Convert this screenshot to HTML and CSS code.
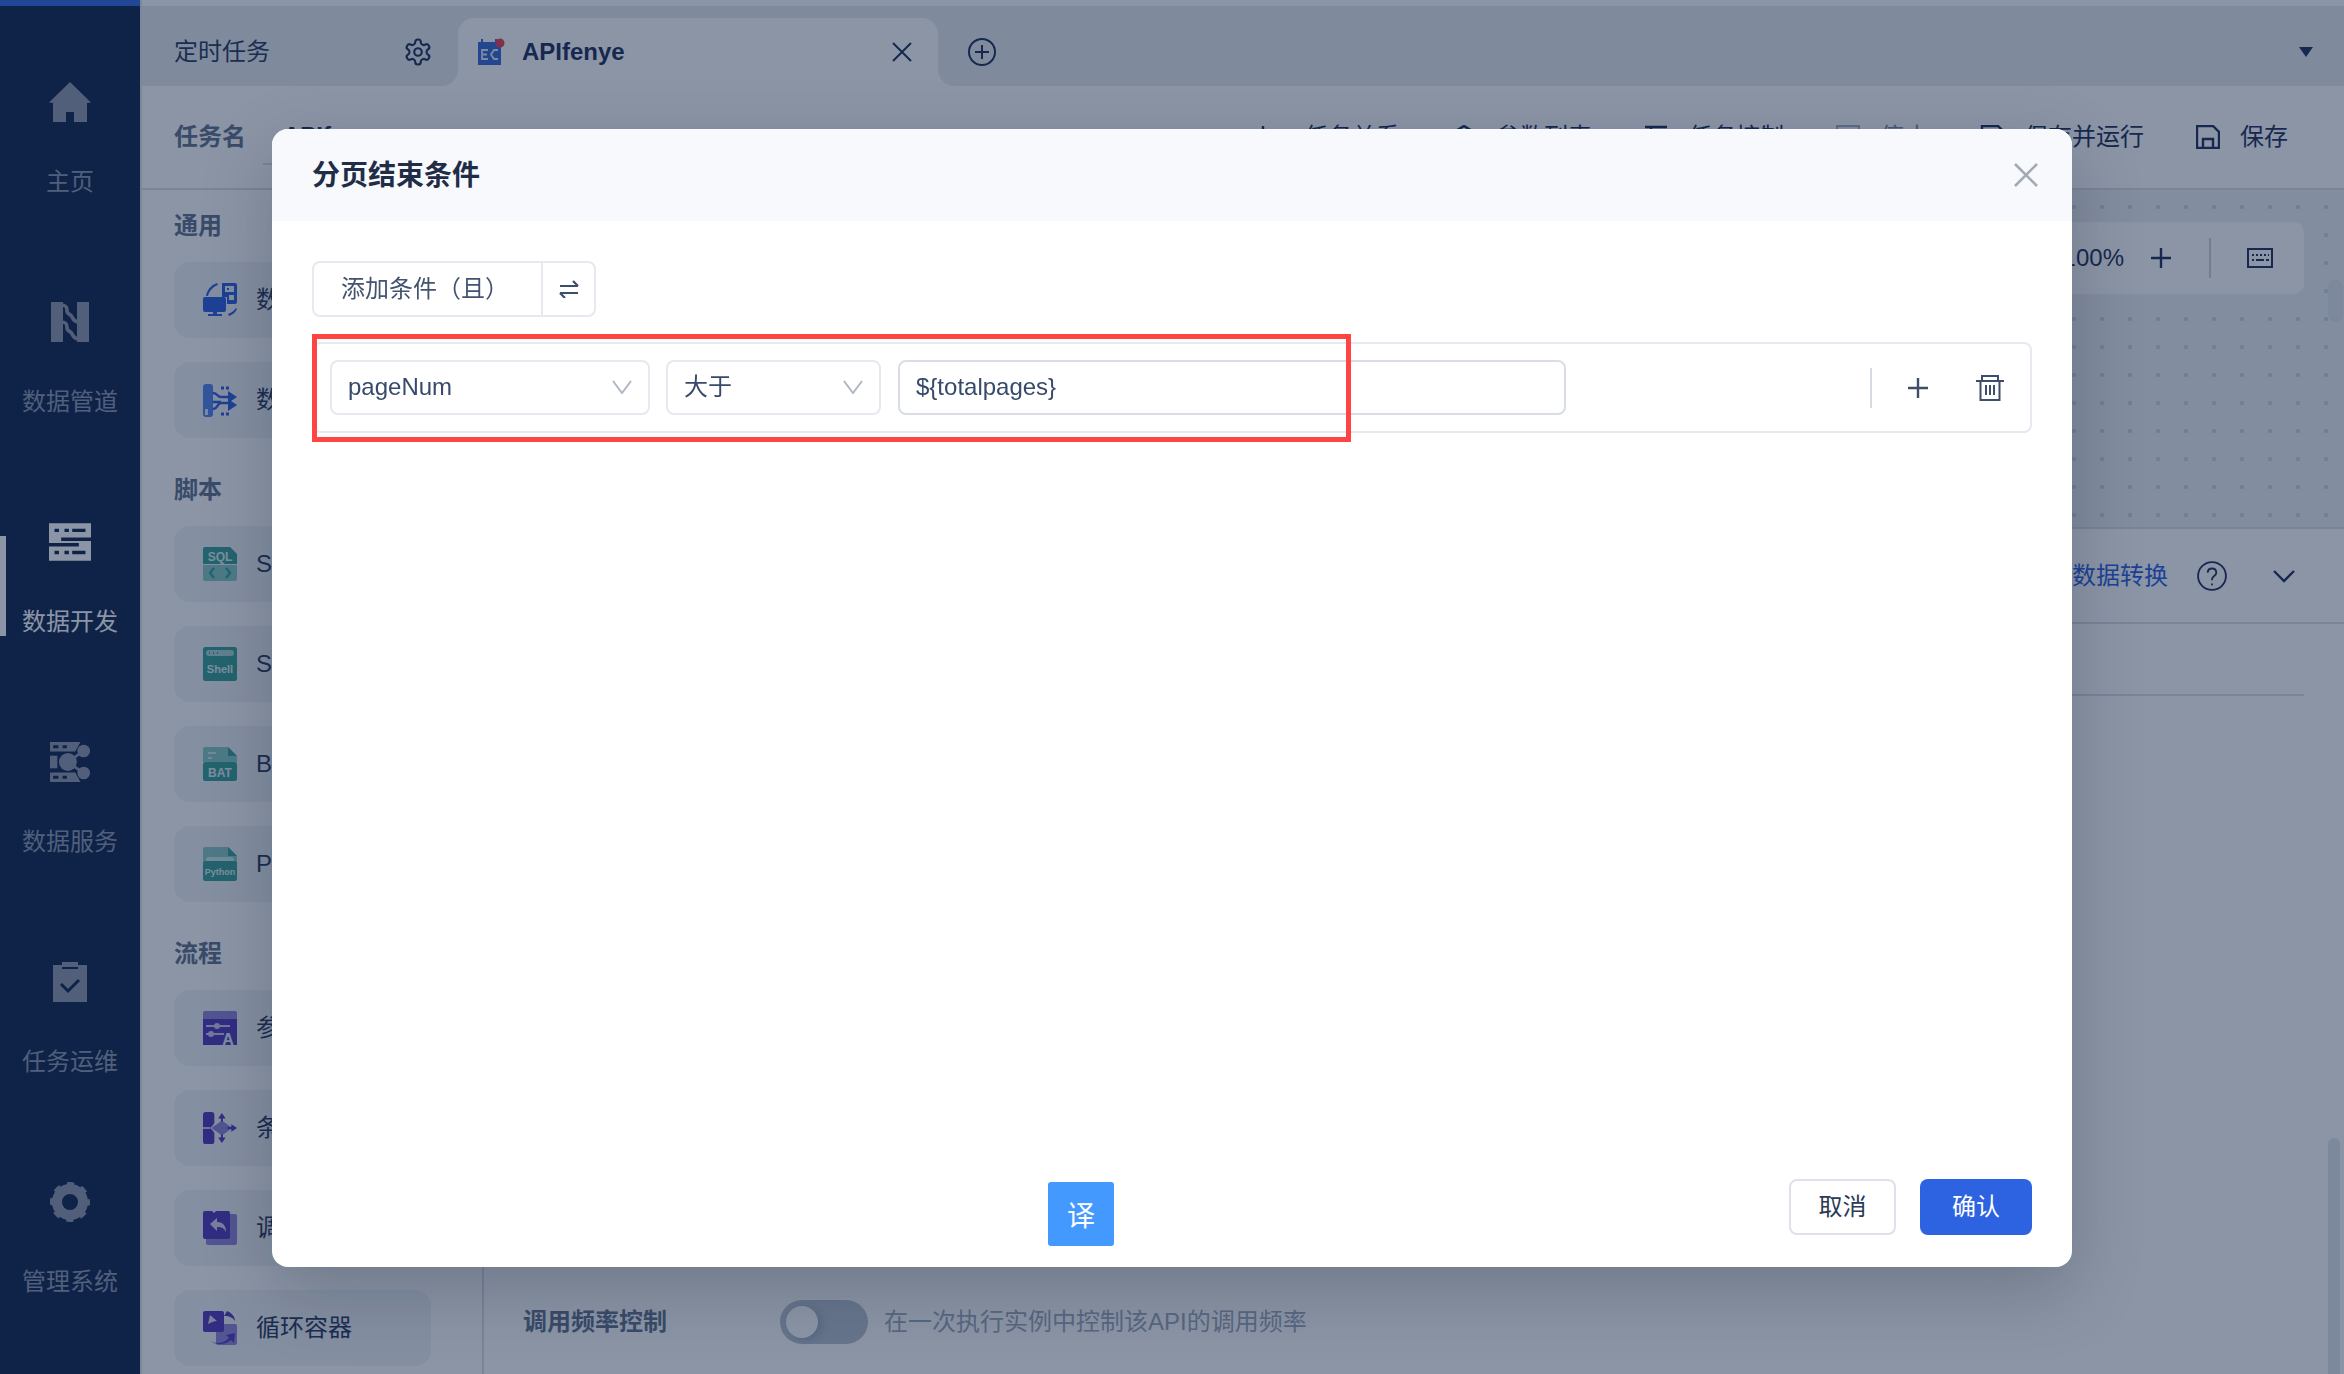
FILE: index.html
```html
<!DOCTYPE html>
<html lang="zh-CN">
<head>
<meta charset="utf-8">
<title>分页结束条件</title>
<link rel="stylesheet" href="styles.css">
</head>
<body>
<div class="app">
  <nav class="sidebar">
    <div class="strip"></div>
    <a class="nav-item">
      <svg class="nav-icon" viewBox="0 0 42 40"><path d="M21 0 42 20.5 38 21V40H25V30H17V40H4V21L0 20.5Z"/></svg>
      <span>主页</span>
    </a>
    <a class="nav-item">
      <svg class="nav-icon" viewBox="0 0 38 40"><path d="M0 0h12v40H0zM26 0h12v40H26z"/><path class="wave" d="M10 3c10 0 3 7 8 9s2 7 9 8M10 20c10 0 3 7 8 9s2 7 9 8" fill="none" stroke-width="3.6"/></svg>
      <span>数据管道</span>
    </a>
    <a class="nav-item is-active">
      <svg class="nav-icon" viewBox="0 0 38 34"><path fill-rule="evenodd" d="M0 0h38v13H11v3h27v18H0V21h27v-3H0zM5 5v3h4V5zm9 0v3h4V5zm7 0v3h12V5zM5 25v3h4v-3zm9 0v3h4v-3zm7 0v3h12v-3z"/></svg>
      <span>数据开发</span>
    </a>
    <a class="nav-item">
      <svg class="nav-icon" viewBox="0 0 38 38"><path fill-rule="evenodd" d="M0 0h29l-5 9H0zM3 3v3h5V3zm9 0v3h4V3zM0 29h24l5 9H0zM3 32v3h5v-3zm9 0v3h4v-3z"/><path d="M0 13h7v12H0z"/><circle cx="32" cy="8.500" r="6"/><circle cx="32" cy="29.500" r="6"/><circle cx="17" cy="19" r="8.500"/><path class="link-line" d="M17 19 32 8.500M17 19l15 10.500" stroke-width="2.600"/></svg>
      <span>数据服务</span>
    </a>
    <a class="nav-item">
      <svg class="nav-icon" viewBox="0 0 34 40"><path d="M0 3h9V0h16v3h9v37H0z"/><path class="cut" d="M9 6h16" fill="none" stroke-width="2"/><path class="cut" d="m8 22 7 7 11-11" fill="none" stroke-width="3"/></svg>
      <span>任务运维</span>
    </a>
    <a class="nav-item">
      <svg class="nav-icon" viewBox="0 0 40 40"><circle class="ring" cx="20" cy="20" r="13" fill="none" stroke-width="10"/><circle class="ring" cx="20" cy="20" r="18" fill="none" stroke-width="4" stroke-dasharray="7 7.14" stroke-dashoffset="3.5"/></svg>
      <span>管理系统</span>
    </a>
  </nav>

  <main class="main">
    <div class="strip strip-main"></div>
    <div class="tabbar">
      <div class="tab">
        <span class="tab-title">定时任务</span>
        <svg class="gear" viewBox="0 0 24 24"><path d="M12.22 2h-.44a2 2 0 0 0-2 2v.18a2 2 0 0 1-1 1.73l-.43.25a2 2 0 0 1-2 0l-.15-.08a2 2 0 0 0-2.73.73l-.22.38a2 2 0 0 0 .73 2.73l.15.1a2 2 0 0 1 1 1.72v.51a2 2 0 0 1-1 1.74l-.15.09a2 2 0 0 0-.73 2.73l.22.38a2 2 0 0 0 2.73.73l.15-.08a2 2 0 0 1 2 0l.43.25a2 2 0 0 1 1 1.73V20a2 2 0 0 0 2 2h.44a2 2 0 0 0 2-2v-.18a2 2 0 0 1 1-1.73l.43-.25a2 2 0 0 1 2 0l.15.08a2 2 0 0 0 2.73-.73l.22-.39a2 2 0 0 0-.73-2.73l-.15-.08a2 2 0 0 1-1-1.74v-.5a2 2 0 0 1 1-1.74l.15-.09a2 2 0 0 0 .73-2.73l-.22-.38a2 2 0 0 0-2.73-.73l-.15.08a2 2 0 0 1-2 0l-.43-.25a2 2 0 0 1-1-1.73V4a2 2 0 0 0-2-2z"/><circle cx="12" cy="12" r="3"/></svg>
      </div>
      <div class="tab-wrap">
        <div class="tab-active">
          <svg class="tab-icon" viewBox="0 0 28 28"><path class="cal" d="M1 5h3V2h2v3h12V2h2v3h4v23H1z"/><path d="M11 13H5v9h6M5 17.500h5M21 13h-4l-3 4.500 3 4.500h4" fill="none" stroke="#dfe6f5" stroke-width="1.8"/><circle class="dot" cx="23" cy="6" r="4.500"/></svg>
          <span class="tab-name">APIfenye</span>
          <svg class="tab-close" viewBox="0 0 20 20"><path d="M1 1l18 18M19 1 1 19"/></svg>
        </div>
      </div>
      <div class="tab-rest">
        <svg class="tab-add" viewBox="0 0 28 28"><circle cx="14" cy="14" r="13"/><path d="M14 7v14M7 14h14"/></svg>
        <span class="tab-caret"></span>
      </div>
    </div>

    <header class="toolbar">
      <strong class="task-label">任务名</strong>
      <span class="task-input">APIfenye</span>
      <div class="tools">
        <span class="tool"><svg viewBox="0 0 24 24"><path d="M3 1v22h18V9"/></svg>任务关系</span>
        <span class="tool"><svg viewBox="0 0 24 24"><path d="M12 1 22 7v10l-10 6-10-6V7z"/></svg>参数列表</span>
        <span class="tool"><svg viewBox="0 0 24 24"><path d="M1 2h22M1 12h22M1 20h22M7 1v8M17 8v8"/></svg>任务控制</span>
        <span class="tool tool-muted"><svg viewBox="0 0 24 24"><rect x="1" y="1" width="22" height="22"/></svg>停止</span>
        <span class="tool"><svg viewBox="0 0 24 24"><path d="M2 1h16l5 5v17H2z"/></svg>保存并运行</span>
        <span class="tool"><svg viewBox="0 0 24 24"><path d="M1 1h16l6 6v16H1zM7 23v-9h10v9"/></svg>保存</span>
      </div>
    </header>

    <div class="workspace">
      <aside class="palette">
        <section class="group">
          <h3>通用</h3>
          <div class="item">
            <svg class="pal-icon" viewBox="0 0 34 34"><path class="blue" d="M3 13C4 7 8 2 14 0l1 2C10 4 6 8 5 13z"/><path class="blue" fill-rule="evenodd" d="M19 0h13a2 2 0 0 1 2 2v17a2 2 0 0 1-2 2h-8V14h-5zM22 3v6h9V3zm2 2h2v2h-2zM26 12v5h5v-5z"/><path class="blue" d="M2 14h19a2 2 0 0 1 2 2v11a2 2 0 0 1-2 2h-7v2h5v2H5v-2h5v-2H2a2 2 0 0 1-2-2V16a2 2 0 0 1 2-2z"/><path class="blue" d="m33 25 1 1c-2 4-5 6-8 7l-1-2c3-1 6-3 8-6z"/></svg>
            <span>数据同步</span>
          </div>
          <div class="item">
            <svg class="pal-icon" viewBox="0 0 34 34"><rect class="blue2" y="1" width="10" height="33" rx="3"/><path d="M10 10c5 0 4 4 8 4h8M10 19h8M10 26c5 0 4-6 8-6h8" fill="none" stroke="#2457df" stroke-width="2.4"/><path class="blue" d="M25 8l9 6-9 6zM25 16l9 6-9 6z"/><path d="M18 5h3M23 5h3M18 31h3M23 31h3" stroke="#2457df" stroke-width="3"/><rect x="2" y="26" width="3" height="6" fill="#dfe6f5"/></svg>
            <span>数据转换</span>
          </div>
        </section>
        <section class="group">
          <h3>脚本</h3>
          <div class="item">
            <svg class="pal-icon" viewBox="0 0 34 34"><path class="teal" d="M2 0h25l7 7v10H0V2a2 2 0 0 1 2-2z"/><path class="teal-l" d="M0 18h34v14a2 2 0 0 1-2 2H2a2 2 0 0 1-2-2z"/><text class="icon-text" x="17" y="14" font-size="12">SQL</text><path d="m11 21-4 5 4 5M23 21l4 5-4 5" fill="none" stroke="#2e9d8f" stroke-width="2.4"/></svg>
            <span>SQL脚本</span>
          </div>
          <div class="item">
            <svg class="pal-icon" viewBox="0 0 34 34"><rect class="teal" width="34" height="34" rx="2.5"/><rect x="3" y="3" width="28" height="6" rx="3" fill="#a9d6d1"/><path d="M6 6h1M10 6h1M14 6h1" stroke="#2e9d8f" stroke-width="2"/><text class="icon-text" x="17" y="26" font-size="11">Shell</text></svg>
            <span>Shell脚本</span>
          </div>
          <div class="item">
            <svg class="pal-icon" viewBox="0 0 34 34"><path class="teal-l" d="M2 0h23l9 9v6H0V2a2 2 0 0 1 2-2z"/><path class="teal" d="M25 0l9 9h-9z"/><path d="M5 6h8M5 11h4" stroke="#cfe8e5" stroke-width="2"/><rect class="teal" y="15" width="34" height="19" rx="2.5"/><text class="icon-text" x="17" y="30" font-size="12">BAT</text></svg>
            <span>BAT脚本</span>
          </div>
          <div class="item">
            <svg class="pal-icon" viewBox="0 0 34 34"><path class="teal-l" d="M2 0h23l9 9v6H0V2a2 2 0 0 1 2-2z"/><path class="teal" d="M25 0l9 9h-9z"/><path d="M3 14c0-3 1-4 3-4h22c2 0 3 1 3 4z" fill="#cfe8e5"/><rect class="teal" y="14" width="34" height="20" rx="2.5"/><text class="icon-text" x="17" y="28" font-size="9">Python</text></svg>
            <span>Python脚本</span>
          </div>
        </section>
        <section class="group">
          <h3>流程</h3>
          <div class="item">
            <svg class="pal-icon" viewBox="0 0 34 34"><path class="pur-l" d="M0 2a2 2 0 0 1 2-2h30a2 2 0 0 1 2 2v6H0z"/><path class="pur" d="M0 8h34v26H0z"/><path d="M3 15h24M3 23h18" stroke="#cfc7ec" stroke-width="2"/><circle cx="14" cy="15" r="3" fill="#cfc7ec"/><circle cx="8" cy="23" r="3" fill="#cfc7ec"/><text class="icon-text" x="25" y="34" font-size="16">A</text></svg>
            <span>参数赋值</span>
          </div>
          <div class="item">
            <svg class="pal-icon" viewBox="0 0 36 34"><path class="pur" d="M3 0h6a3 3 0 0 1 3 3v9l-4 5 4 5v9a3 3 0 0 1-3 3H3a3 3 0 0 1-3-3V3a3 3 0 0 1 3-3z"/><path class="pur-l" d="M20 9l11 8-11 8-11-8z"/><path class="pur" d="M20 1l4 6h-3v3h-2V7h-3zM20 33l4-6h-3v-3h-2v3h-3zM36 17l-6-4v3h-4v2h4v3z"/><path d="M0 17h8" stroke="#cfc7ec" stroke-width="2"/></svg>
            <span>条件分支</span>
          </div>
          <div class="item">
            <svg class="pal-icon" viewBox="0 0 34 34"><rect class="pur-l" x="3" y="3" width="31" height="31" rx="2"/><path class="pur" d="M2 0h7l2 2 2-2h12a2 2 0 0 1 2 2v24a2 2 0 0 1-2 2H2a2 2 0 0 1-2-2V2a2 2 0 0 1 2-2z"/><path d="M7 13l7-6v4c6 0 9 4 9 10-2-4-4-5-9-5v4z" fill="#dcd7f0"/></svg>
            <span>调用任务</span>
          </div>
          <div class="item">
            <svg class="pal-icon" viewBox="0 0 34 34"><rect class="pur-l" x="13" y="13" width="21" height="21" rx="2"/><rect class="pur" width="21" height="21" rx="2"/><path d="M5 13l2-9 7 6c-3 0-5 1-9 3z" fill="#dcd7f0"/><path class="pur" d="M21 5l3-5c5 2 8 6 8 10-2-3-5-5-11-5zM7 30c5 3 14 3 19-3l-3-3 9-2-1 10-3-3c-6 5-15 5-21 1z"/></svg>
            <span>循环容器</span>
          </div>
        </section>
      </aside>

      <div class="content">
        <div class="canvas">
          <div class="zoom-box">
            <span>100%</span>
            <svg class="plus" viewBox="0 0 24 24"><path d="M12 2v20M2 12h20"/></svg>
            <i class="vline"></i>
            <svg class="kbd" viewBox="0 0 26 20"><rect x="1" y="1" width="24" height="18"/><path d="M5 7h2M9 7h2M13 7h2M17 7h2M21 7h1M5 12h2M9 12h8M19 12h3" /></svg>
          </div>
          <i class="thumb thumb-top"></i>
        </div>
        <div class="props">
          <div class="props-head">
            <span class="link">数据转换</span>
            <svg class="help" viewBox="0 0 28 28"><circle cx="14" cy="14" r="13"/><path d="M10 11c0-3 2-4 4-4s4 1 4 4-4 3-4 6v1M14 21v1.6"/></svg>
            <svg class="chev" viewBox="0 0 22 14"><path d="M1 2l10 10L21 2"/></svg>
          </div>
          <div class="props-line"></div>
          <div class="rate-row">
            <strong class="rate-label">调用频率控制</strong>
            <span class="toggle"><i class="knob"></i></span>
            <span class="rate-hint">在一次执行实例中控制该API的调用频率</span>
          </div>
          <i class="thumb thumb-low"></i>
        </div>
      </div>
    </div>
  </main>
</div>

<div class="mask"></div>

<div class="modal" role="dialog">
  <header class="modal-head">
    <h2>分页结束条件</h2>
    <svg class="modal-close" viewBox="0 0 24 24"><path d="M1 1l22 22M23 1 1 23"/></svg>
  </header>
  <div class="modal-body">
    <div class="add-group">
      <span class="add-label">添加条件（且）</span>
      <span class="add-swap">
        <svg viewBox="0 0 20 18"><path d="M1 6h18M14 1l5 5M19 13H1M6 18l-5-5"/></svg>
      </span>
    </div>
    <div class="cond-row">
      <div class="field select select-a">pageNum<svg viewBox="0 0 20 14"><path d="M1 1l9 12 9-12"/></svg></div>
      <div class="field select select-b">大于<svg viewBox="0 0 20 14"><path d="M1 1l9 12 9-12"/></svg></div>
      <div class="field input">${totalpages}</div>
      <div class="cond-actions">
        <i class="cond-line"></i>
        <svg class="cond-plus" viewBox="0 0 24 24"><path d="M12 2v20M2 12h20"/></svg>
        <svg class="cond-trash" viewBox="0 0 28 26"><path d="M0 6h28M6 6V1h16v5M4.500 6v19h19V6M10 10v10M14 10v10M18 10v10"/></svg>
      </div>
    </div>
  </div>
  <footer class="modal-foot">
    <button class="btn btn-cancel">取消</button>
    <button class="btn btn-ok">确认</button>
  </footer>
  <div class="annotation"></div>
</div>

<button class="translate">译</button>
</body>
</html>
```

FILE: styles.css
```css
* { box-sizing: border-box; }
html, body { margin: 0; height: 100%; overflow: hidden; }
body {
  font-family: "Liberation Sans", "Noto Sans CJK SC", sans-serif;
  font-size: 24px;
  line-height: 34px;
  color: #1f2f55;
  background: #fff;
}
h2, h3 { margin: 0; }
i { display: block; }

.app { display: flex; width: 2344px; height: 1374px; }

/* sidebar */
.sidebar { width: 140px; flex: none; background: #061941; }
.sidebar .strip { height: 6px; margin-bottom: 76px; background: #2d62e0; }
.nav-item {
  position: relative;
  display: flex;
  flex-direction: column;
  align-items: center;
  height: 220px;
  color: #8693ab;
  fill: #8a93a9;
}
.nav-icon { width: 42px; height: 40px; margin-bottom: 43px; }
.nav-icon .cut { stroke: #061941; }
.nav-icon .ring { stroke: #8a93a9; }
.nav-icon .wave { stroke: #8a93a9; }
.nav-icon .link-line { stroke: #8a93a9; }
.nav-item.is-active { color: #fff; fill: #fff; }
.nav-item.is-active::before {
  content: "";
  position: absolute;
  left: 0;
  top: 14px;
  width: 6px;
  height: 100px;
  background: #fff;
}

/* main */
.main { flex: 1; min-width: 0; display: flex; flex-direction: column; border-left: 2px solid #dfe4ea; }
.strip-main { height: 6px; flex: none; background: #fff; }
.tabbar { display: flex; height: 80px; flex: none; background: #fff; }
.tab {
  width: 316px;
  display: flex;
  align-items: center;
  justify-content: space-between;
  padding: 12px 25px 0 32px;
  background: #e6ebed;
  border-radius: 0 0 16px 0;
}
.gear { width: 30px; height: 30px; fill: none; stroke: #142551; stroke-width: 1.7; }
.tab-wrap { width: 480px; padding-top: 12px; background: #e6ebed; }
.tab-active {
  height: 68px;
  display: flex;
  align-items: center;
  padding-left: 19px;
  background: #fff;
  border-radius: 16px 16px 0 0;
}
.tab-icon { width: 28px; height: 28px; margin: -2px 17px 0 0; flex: none; }
.cal { fill: #2d62d0; }
.dot { fill: #e4384a; }
.tab-name { font-weight: 700; color: #142551; }
.tab-close { width: 20px; height: 20px; margin-left: auto; margin-right: 26px; fill: none; stroke: #142551; stroke-width: 2; }
.tab-rest {
  flex: 1;
  display: flex;
  align-items: center;
  padding: 12px 0 0 30px;
  background: #e6ebed;
  border-radius: 0 0 0 16px;
}
.tab-add { width: 28px; height: 28px; fill: none; stroke: #142551; stroke-width: 2; }
.tab-caret {
  width: 0;
  height: 0;
  margin-left: auto;
  margin-right: 31px;
  border-left: 7px solid transparent;
  border-right: 7px solid transparent;
  border-top: 10px solid #142551;
}

/* toolbar */
.toolbar {
  height: 104px;
  flex: none;
  display: flex;
  align-items: center;
  padding: 0 56px 1px 32px;
  border-bottom: 2px solid #d8dde3;
  background: #fff;
}
.task-label { color: #5b6b85; }
.task-input {
  width: 460px;
  margin-left: 17px;
  padding: 10px 0 10px 20px;
  border-bottom: 2px solid #d8dde3;
  color: #142551;
  font-weight: 700;
}
.tools { display: flex; gap: 52px; margin-left: auto; color: #142551; }
.tool { display: flex; align-items: center; gap: 20px; }
.tool svg { width: 24px; height: 24px; fill: none; stroke: #142551; stroke-width: 2.4; }
.tool-muted { color: #7a8599; }
.tool-muted svg { stroke: #a7afbd; }

/* left palette */
.workspace { flex: 1; min-height: 0; display: flex; }
.palette {
  width: 342px;
  flex: none;
  padding: 19px 0 0 32px;
  border-right: 2px solid #d8dde3;
  background: #fff;
  overflow: hidden;
}
.group { display: flex; flex-direction: column; gap: 24px; margin-bottom: 35px; }
.group h3 { margin-bottom: -5px; font-size: 24px; font-weight: 700; color: #5b6b85; }
.item {
  width: 257px;
  height: 76px;
  flex: none;
  display: flex;
  align-items: center;
  gap: 19px;
  padding-left: 29px;
  background: #f0f3f5;
  border-radius: 16px;
  white-space: nowrap;
}
.pal-icon { width: 34px; height: 34px; flex: none; overflow: visible; }
.blue { fill: #2457df; }
.blue2 { fill: #4f7ee8; }
.teal { fill: #2e9d8f; }
.teal-l { fill: #85c9c1; }
.pur { fill: #4c2fb7; }
.pur-l { fill: #8d7ed6; }
.icon-text { fill: #e3f1ef; font-family: "Liberation Sans", sans-serif; font-weight: 700; text-anchor: middle; }

/* canvas */
.content { flex: 1; min-width: 0; display: flex; flex-direction: column; }
.canvas {
  position: relative;
  height: 339px;
  flex: none;
  background-color: #eceef1;
  background-image: radial-gradient(circle, #cdd0d8 2px, transparent 2.4px);
  background-size: 28px 28px;
  background-position: 8px 3px;
  border-bottom: 2px solid #d8dde3;
}
.zoom-box {
  position: absolute;
  right: 40px;
  top: 32px;
  width: 400px;
  height: 72px;
  display: flex;
  align-items: center;
  justify-content: flex-end;
  padding-right: 31px;
  background: #fff;
  border-radius: 10px;
  color: #142551;
}
.plus { width: 24px; height: 24px; margin-left: 25px; fill: none; stroke: #142551; stroke-width: 2.4; }
.vline { width: 2px; height: 40px; margin: 0 36px; background: #c9ced6; }
.kbd { width: 26px; height: 20px; fill: none; stroke: #142551; stroke-width: 2; }
.thumb { position: absolute; right: 1px; width: 15px; border-radius: 8px; background: #e0e4e8; }
.thumb-top { top: 90px; height: 42px; }
.thumb-low { top: 609px; bottom: 0; right: 4px; width: 12px; border-radius: 8px 8px 0 0; }

/* properties */
.props { position: relative; flex: 1; min-height: 0; display: flex; flex-direction: column; background: #fff; }
.props-head {
  height: 95px;
  flex: none;
  display: flex;
  align-items: center;
  justify-content: flex-end;
  padding-right: 49px;
  border-bottom: 2px solid #d8dde3;
}
.link { color: #2457df; }
.help { width: 30px; height: 30px; margin-left: 29px; fill: none; stroke: #142551; stroke-width: 1.7; }
.chev { width: 22px; height: 14px; margin-left: 46px; fill: none; stroke: #142551; stroke-width: 2.4; }
.props-line { height: 2px; flex: none; margin: 70px 40px 0 0; background: #d8dde3; }
.rate-row { display: flex; align-items: center; margin-top: auto; padding: 0 0 30px 39px; }
.rate-label { width: 257px; color: #5b6b85; }
.toggle { position: relative; width: 88px; height: 44px; border-radius: 22px; background: #b6c0cc; }
.knob { position: absolute; left: 6px; top: 6px; width: 32px; height: 32px; border-radius: 50%; background: #fff; box-shadow: 4px 2px 8px rgba(20, 37, 81, .18); }
.rate-hint { margin-left: 16px; color: #9aa3b5; }

/* dialog */
.mask { position: fixed; inset: 0; background: rgba(24, 43, 77, .5); }
.modal {
  position: fixed;
  left: 272px;
  top: 129px;
  width: 1800px;
  height: 1138px;
  display: flex;
  flex-direction: column;
  background: #fff;
  border-radius: 16px;
  box-shadow: 0 24px 70px rgba(20, 25, 40, .22);
}
.modal-head {
  height: 92px;
  flex: none;
  display: flex;
  align-items: center;
  justify-content: space-between;
  padding: 2px 34px 0 40px;
  background: #f8f9fd;
  border-radius: 16px 16px 0 0;
}
.modal-head h2 { font-size: 28px; line-height: 40px; font-weight: 700; color: #1f2d47; }
.modal-close { width: 24px; height: 24px; margin-top: -2px; fill: none; stroke: #a3a9b5; stroke-width: 2.6; }
.modal-body { flex: 1; min-height: 0; padding: 40px 40px 0; }
.add-group {
  display: flex;
  width: 284px;
  height: 56px;
  border: 2px solid #e6e9f0;
  border-radius: 8px;
}
.add-label { width: 229px; padding-left: 27px; line-height: 52px; color: #44546f; border-right: 2px solid #e6e9f0; }
.add-swap { flex: 1; display: flex; align-items: center; justify-content: center; }
.add-swap svg { width: 20px; height: 18px; fill: none; stroke: #3d4d6a; stroke-width: 2.2; }
.cond-row {
  display: flex;
  align-items: center;
  height: 91px;
  margin-top: 25px;
  padding: 0 26px 1px 16px;
  border: 2px solid #e6e9f0;
  border-radius: 8px;
}
.field {
  display: flex;
  align-items: center;
  justify-content: space-between;
  height: 55px;
  padding: 0 16px 0 16px;
  border: 2px solid #e6e9f0;
  border-radius: 8px;
  color: #384a6b;
}
.field svg { width: 20px; height: 14px; fill: none; stroke: #b0b7c4; stroke-width: 2; }
.select-a { width: 320px; margin-right: 16px; }
.select-b { width: 215px; margin-right: 17px; }
.input { width: 668px; border-color: #d9dde6; }
.cond-actions { display: flex; align-items: center; margin-left: auto; margin-bottom: -1px; }
.cond-line { width: 2px; height: 40px; background: #d5dae3; }
.cond-plus { width: 24px; height: 24px; margin: 0 46px 0 34px; fill: none; stroke: #3d4d6a; stroke-width: 2.4; }
.cond-trash { width: 28px; height: 26px; fill: none; stroke: #3d4d6a; stroke-width: 2; }
.modal-foot { display: flex; justify-content: flex-end; gap: 24px; padding: 0 40px 32px; }
.btn {
  height: 56px;
  border-radius: 8px;
  font: inherit;
  padding: 0;
}
.btn-cancel { width: 107px; background: #fff; border: 2px solid #dde1ea; color: #2b3a55; }
.btn-ok { width: 112px; background: #2d62e0; border: 0; color: #fff; font-weight: 400; }
.annotation {
  position: absolute;
  left: 40px;
  top: 205px;
  width: 1039px;
  height: 108px;
  border: 5px solid #ff4444;
  pointer-events: none;
}
.translate {
  position: fixed;
  left: 1048px;
  top: 1182px;
  width: 66px;
  height: 64px;
  padding: 0;
  border: 0;
  border-radius: 3px;
  background: #4499ff;
  color: #fff;
  font: 28px/64px "Noto Sans CJK SC", sans-serif;
}
```
